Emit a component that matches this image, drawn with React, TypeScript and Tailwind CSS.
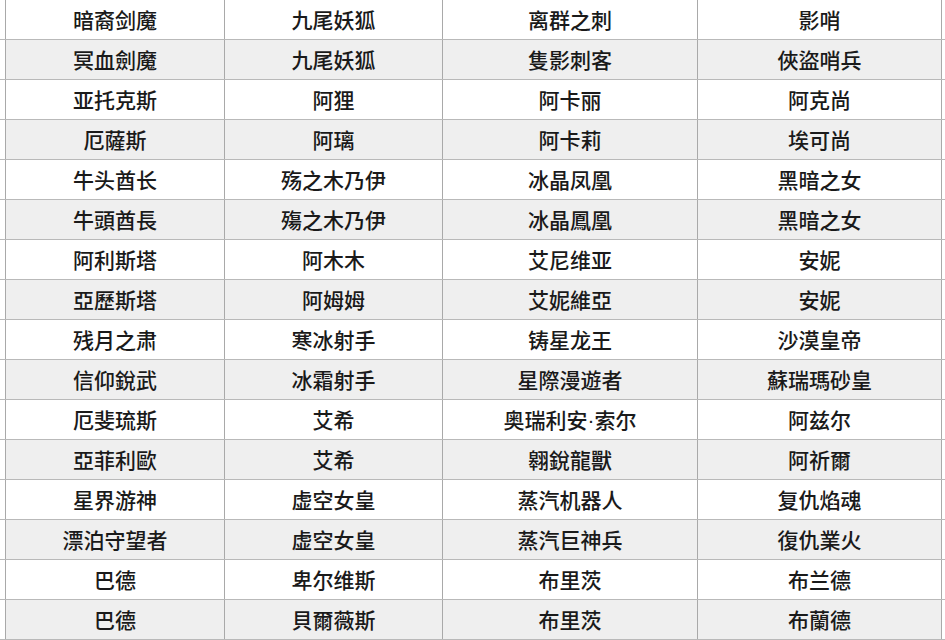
const rows: string[][] = [
  ['暗裔剑魔', '九尾妖狐', '离群之刺', '影哨'],
  ['冥血劍魔', '九尾妖狐', '隻影刺客', '俠盜哨兵'],
  ['亚托克斯', '阿狸', '阿卡丽', '阿克尚'],
  ['厄薩斯', '阿璃', '阿卡莉', '埃可尚'],
  ['牛头酋长', '殇之木乃伊', '冰晶凤凰', '黑暗之女'],
  ['牛頭酋長', '殤之木乃伊', '冰晶鳳凰', '黑暗之女'],
  ['阿利斯塔', '阿木木', '艾尼维亚', '安妮'],
  ['亞歷斯塔', '阿姆姆', '艾妮維亞', '安妮'],
  ['残月之肃', '寒冰射手', '铸星龙王', '沙漠皇帝'],
  ['信仰銳武', '冰霜射手', '星際漫遊者', '蘇瑞瑪砂皇'],
  ['厄斐琉斯', '艾希', '奥瑞利安·索尔', '阿兹尔'],
  ['亞菲利歐', '艾希', '翱銳龍獸', '阿祈爾'],
  ['星界游神', '虚空女皇', '蒸汽机器人', '复仇焰魂'],
  ['漂泊守望者', '虚空女皇', '蒸汽巨神兵', '復仇業火'],
  ['巴德', '卑尔维斯', '布里茨', '布兰德'],
  ['巴德', '貝爾薇斯', '布里茨', '布蘭德'],
];

const widths = ['w-[219px]', 'w-[218px]', 'w-[255px]', 'w-[244px]'];

// the middle dot should stay narrow, so it gets a latin font
function Name({ text }: { text: string }) {
  const parts = text.split('·');
  if (parts.length === 1) return <>{text}</>;
  return (
    <>
      {parts[0]}
      <span style={{ fontFamily: '"Liberation Sans", sans-serif' }}>·</span>
      {parts[1]}
    </>
  );
}

export default function App() {
  return (
    <div
      className="w-[945px] h-[640px] overflow-hidden bg-white text-[#1a1a1a]"
      style={{ fontFamily: '"Noto Sans CJK SC", "Noto Sans", sans-serif' }}
    >
      {rows.map((row, i) => (
        <div
          key={i}
          className={`flex h-[40px] border-b-[1.5px] border-[#b9b9b9] ${i % 2 === 1 ? 'bg-[#efefef]' : 'bg-white'}`}
        >
          {/* left gutter */}
          <div className="w-[5px] shrink-0 bg-white" />
          {row.map((cell, j) => (
            <div
              key={j}
              className={`${widths[j]} shrink-0 flex items-center justify-center border-l-[1.5px] border-[#a9a9a9] text-[21px] font-medium leading-none`}
            >
              <Name text={cell} />
            </div>
          ))}
          <div className="flex-1 border-l-[1.5px] border-[#a9a9a9] bg-white" />
        </div>
      ))}
    </div>
  );
}
